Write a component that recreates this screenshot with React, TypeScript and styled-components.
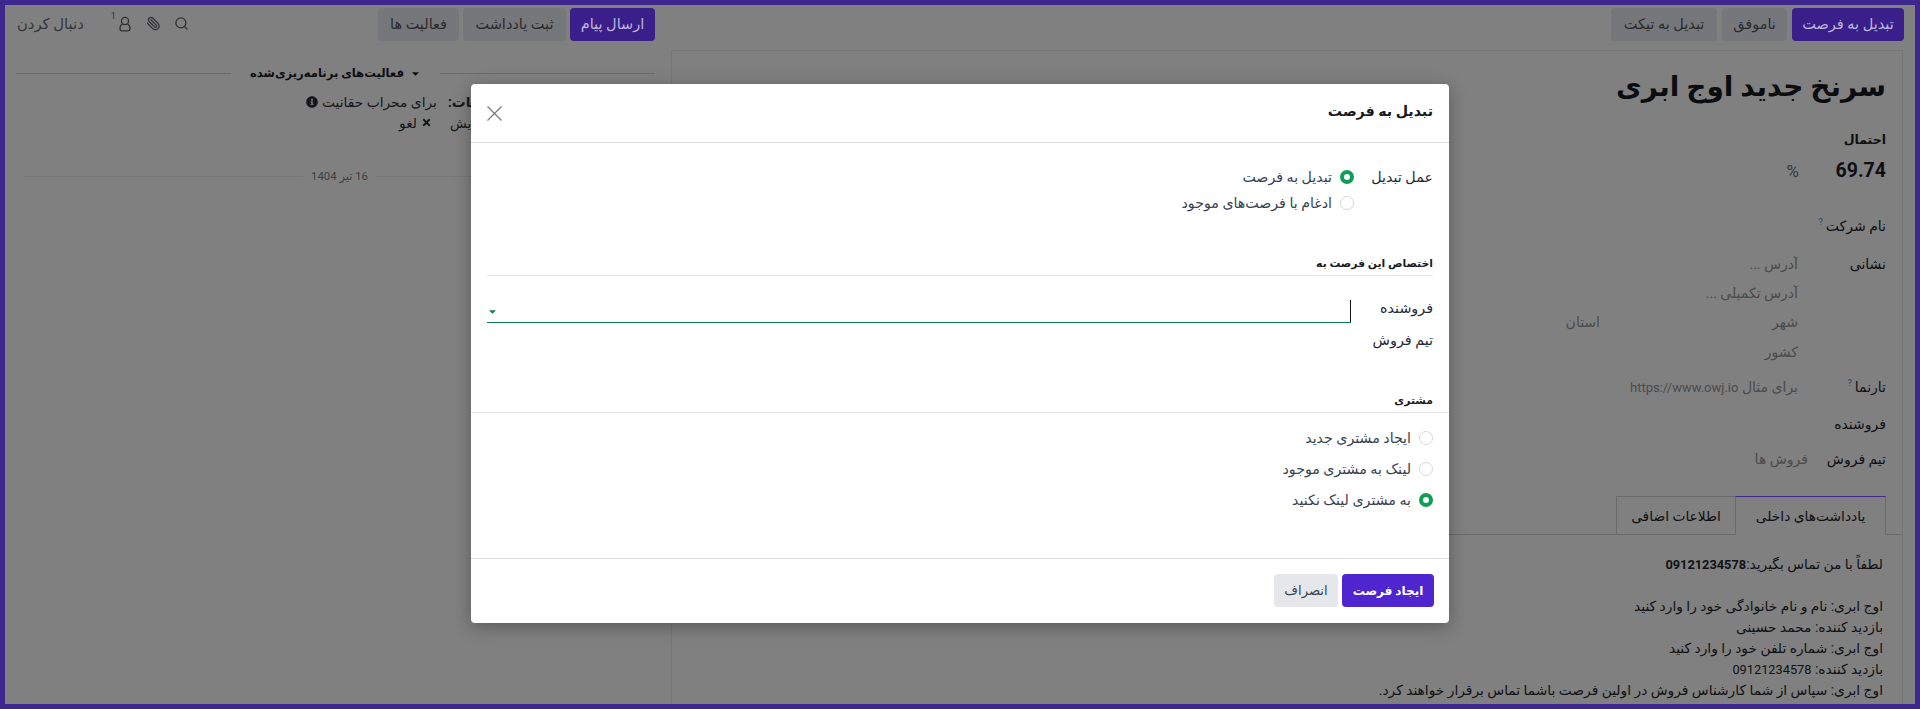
import React from "react";
import styled, { createGlobalStyle } from "styled-components";
import { Search, Paperclip } from "lucide-react";
import { FaInfoCircle, FaTimes, FaCaretDown } from "react-icons/fa";

const Global = createGlobalStyle`
  html, body { margin: 0; padding: 0; height: 100%; overflow: hidden; background: #808080; }
  * { box-sizing: border-box; }
  body { font-family: "DejaVu Sans", sans-serif; }
`;
const FONT = `Roboto, "DejaVu Sans", sans-serif`;

const Frame = styled.div`
  position: relative; width: 1920px; height: 709px; border: 5px solid #3f2790;
  background: #808080; display: flex; direction: rtl; font-family: ${FONT};
  font-size: 14px; color: #0e0f12; overflow: hidden;
`;
const FormColumn = styled.section`
  width: 1244px; flex: none; display: flex; flex-direction: column;
`;
const ChatterColumn = styled.aside`
  flex: 1; display: flex; flex-direction: column; padding: 0 16px 0 11px; min-width: 0;
`;
const StatusBar = styled.div`
  display: flex; gap: 5px; padding: 3px 11px 0 0; height: 36px; flex: none;
`;
const Btn = styled.button<{ $primary?: boolean; $w: number }>`
  width: ${p => p.$w}px; height: 33px; flex: none; border: 0; border-radius: 4px; padding: 0;
  font: inherit; font-size: 14.5px; white-space: nowrap;
  background: ${p => (p.$primary ? "#3a1e8a" : "#76777a")};
  color: ${p => (p.$primary ? "#bfb6da" : "#2a2b2f")};
`;
const Sheet = styled.div`
  flex: 1; margin: 9px 12px 0 0; border: 1px solid #777; border-bottom: 0; padding-top: 14px; overflow: hidden; min-height: 0;
`;
const Title = styled.h1`
  margin: 0; padding-right: 16px; height: 46px; line-height: 44px; font-size: 28px; font-weight: 700; color: #0b0c0f;
`;
const Row = styled.div<{ $mt: number; $h?: number; $bold?: boolean }>`
  margin-top: ${p => p.$mt}px; height: ${p => p.$h ?? 24}px; line-height: ${p => p.$h ?? 24}px;
  padding-right: 16px; display: flex; align-items: center; white-space: nowrap;
  font-weight: ${p => (p.$bold ? 700 : 400)}; ${p => (p.$bold ? "font-size: 12.5px;" : "")}
`;
const Prob = styled.strong`
  font-size: 19.5px; width: 50px; flex: none; font-family: Roboto, sans-serif;
`;
const Percent = styled.span`
  margin-right: 37px; font-size: 17px; color: #3a3a3a;
`;
const Help = styled.sup`
  font-size: 9px; color: #2b4a5c; margin-right: 3px; line-height: 0; align-self: flex-start; margin-top: 8px;
`;
const LabelCell = styled.span<{ $w?: number }>`
  width: ${p => p.$w ?? 88}px; flex: none; display: inline-flex;
`;
const Placeholder = styled.span<{ $w?: number }>`
  color: #4b4b4d; ${p => (p.$w ? `width: ${p.$w}px; flex: none;` : "")}
`;
const Latin = styled.span`
  font-family: Roboto, sans-serif; font-size: 13px;
`;
const AddressRow = styled.div`
  height: 29.33px; padding-right: 16px; display: flex; align-items: center; white-space: nowrap;
`;
const AddressBlock = styled.div`
  margin-top: 11px;
`;
const Tabs = styled.div`
  margin-top: 25px; height: 39px; display: flex; padding-right: 16px; border-bottom: 1px solid #6a6a6a;
`;
const Tab = styled.div<{ $active?: boolean; $w: number }>`
  width: ${p => p.$w}px; height: 39px; display: flex; align-items: center; justify-content: center; font-size: 13.8px;
  border: 1px solid #6a6a6a; border-top-color: ${p => (p.$active ? "#3f2790" : "#6a6a6a")};
  border-bottom-color: ${p => (p.$active ? "#808080" : "#6a6a6a")};
  ${p => (p.$active ? "" : "border-right: 0;")}
`;
const Notes = styled.div`
  padding: 19px 19px 0 0; line-height: 21px; font-size: 13.8px; color: #101114; white-space: nowrap;
`;
const Digits = styled.span<{ $bold?: boolean }>`
  font-family: Roboto, sans-serif; font-size: 12.8px; font-weight: ${p => (p.$bold ? 700 : 400)};
`;
const ChatterBar = styled.div`
  display: flex; align-items: flex-start; justify-content: space-between; padding-top: 3px; height: 36px; flex: none;
`;
const ChatterButtons = styled.div`
  display: flex; gap: 4px;
`;
const ChatterTools = styled.div`
  display: flex; align-items: center; height: 31px; color: #3c3c3c;
`;
const ToolIcon = styled.span<{ $mr: number }>`
  display: inline-flex; margin-left: ${p => p.$mr}px; color: #2f3033;
`;
const ClipIcon = styled(Paperclip)`
  transform: scaleX(-1);
`;
const Count = styled.sup`
  font-size: 9px; line-height: 0; align-self: flex-start; margin: 8px 0 0 27px; color: #2f3033; font-family: Roboto, sans-serif;
`;
const Follow = styled.span`
  font-size: 14.8px; color: #35363a; margin-left: 1px;
`;
const Section = styled.div`
  margin-top: 22px; height: 20px; display: flex; align-items: center; font-size: 11.6px; font-weight: 700; gap: 8px; white-space: nowrap;
`;
const SectionLine = styled.span`
  flex: 1; height: 1px; background: #6b6b6b;
`;
const SectionTitle = styled.span`
  display: inline-flex; align-items: center; gap: 6px; padding: 0 11px; color: #0d0e10;
`;
const ActivityRow = styled.div<{ $pad: number; $mt: number; $gap: number }>`
  display: flex; justify-content: flex-end; align-items: center; gap: ${p => p.$gap}px; padding-left: ${p => p.$pad}px;
  margin-top: ${p => p.$mt}px; height: 21px; white-space: nowrap; font-size: 13.8px; color: #16171a;
`;
const Inline = styled.span`
  display: inline-flex; align-items: center; gap: 4px;
`;
const DateRow = styled.div`
  margin-top: 33px; height: 20px; display: flex; align-items: center; gap: 8px; padding-left: 8px; font-size: 11.4px; color: #3d3e40; white-space: nowrap;
`;
const DateLine = styled.span`
  flex: 1; height: 1px; background: #777;
`;

/* Modal */
const Modal = styled.div`
  position: absolute; left: 466px; top: 79px; width: 978px; height: 539px; background: #fff;
  border-radius: 4px; box-shadow: 0 4px 18px rgba(0, 0, 0, .3); display: flex; flex-direction: column; color: #1f2937;
`;
const ModalHead = styled.header`
  height: 59px; flex: none; border-bottom: 1px solid #dee2e6; display: flex; align-items: center; justify-content: space-between; padding: 0 16px;
`;
const ModalTitle = styled.h4`
  margin: 0; font-size: 14.2px; font-weight: 700; color: #16181d; position: relative; top: -2px;
`;
const CloseIcon = styled.svg`
  width: 15px; height: 15px; color: #7b7b7b; flex: none;
`;
const ModalBody = styled.div`
  flex: 1; padding: 0 16px; display: flex; flex-direction: column; min-height: 0;
`;
const ConvertRow = styled.div`
  display: flex; margin-top: 24px;
`;
const FieldName = styled.span`
  width: 79px; flex: none; font-size: 14.3px; line-height: 20px;
`;
const RadioCol = styled.div`
  display: flex; flex-direction: column;
`;
const RadioRow = styled.label<{ $h: number }>`
  height: ${p => p.$h}px; display: flex; align-items: center; gap: 8px; font-size: 14.2px; color: #374151; white-space: nowrap;
`;
const Radio = styled.span<{ $on?: boolean }>`
  width: 14px; height: 14px; flex: none; border-radius: 50%; background: #fff;
  border: ${p => (p.$on ? "4px solid #0f9d58" : "1px solid #d5d7da")};
`;
const GroupHead = styled.div<{ $mt: number }>`
  margin-top: ${p => p.$mt}px; height: 20px; line-height: 20px; font-size: 10.8px; font-weight: 700; color: #1b1d22;
`;
const GroupRule = styled.div<{ $bleed?: boolean }>`
  height: 1px; background: #e3e5e8; margin-top: 1px; flex: none; ${p => (p.$bleed ? "margin-left: -16px; margin-right: -16px;" : "")}
`;
const SelectRow = styled.div`
  display: flex; margin-top: 24px; height: 23px;
`;
const SelectLabel = styled.span`
  width: 82px; flex: none; font-size: 14.3px; line-height: 17px;
`;
const Select = styled.div`
  flex: 1; height: 23px; border-bottom: 1px solid #0f7a5a; display: flex; align-items: center; justify-content: space-between; color: #1b7a5c;
`;
const Caret = styled.span`
  width: 1px; height: 22px; background: #111;
`;
const TeamLabel = styled.div`
  margin-top: 7px; font-size: 14.3px; line-height: 20px;
`;
const CustomerRadios = styled.div`
  margin-top: 9px; display: flex; flex-direction: column;
`;
const ModalFoot = styled.footer`
  height: 65px; flex: none; border-top: 1px solid #dee2e6; display: flex; gap: 4px; padding: 15px 15px 0;
`;
const ModalBtn = styled.button<{ $primary?: boolean; $w: number }>`
  width: ${p => p.$w}px; height: 33px; border: 0; border-radius: 4px; padding: 0; font: inherit;
  font-size: ${p => (p.$primary ? 12 : 13.2)}px;
  font-weight: ${p => (p.$primary ? 700 : 400)};
  background: ${p => (p.$primary ? "#4f25cf" : "#e5e7eb")};
  color: ${p => (p.$primary ? "#fff" : "#374151")};
`;

export default function App() {
  return (
    <>
      <Global />
      <Frame>
        <FormColumn>
          <StatusBar>
            <Btn $primary $w={112}>تبدیل به فرصت</Btn>
            <Btn $w={65}>ناموفق</Btn>
            <Btn $w={106}>تبدیل به تیکت</Btn>
          </StatusBar>
          <Sheet>
            <Title>سرنخ جدید اوج ابری</Title>
            <Row $mt={19} $h={20} $bold>احتمال</Row>
            <Row $mt={7} $h={28}><Prob>69.74</Prob><Percent>%</Percent></Row>
            <Row $mt={29}>نام شرکت<Help>?</Help></Row>
            <AddressBlock>
              <AddressRow><LabelCell>نشانی</LabelCell><Placeholder>آدرس ...</Placeholder></AddressRow>
              <AddressRow><LabelCell /><Placeholder>آدرس تکمیلی ...</Placeholder></AddressRow>
              <AddressRow><LabelCell /><Placeholder $w={198}>شهر</Placeholder><Placeholder>استان</Placeholder></AddressRow>
              <AddressRow><LabelCell /><Placeholder>کشور</Placeholder></AddressRow>
            </AddressBlock>
            <Row $mt={9}><LabelCell>تارنما<Help>?</Help></LabelCell><Placeholder>برای مثال <Latin>https://www.owj.io</Latin></Placeholder></Row>
            <Row $mt={13}>فروشنده</Row>
            <Row $mt={11}><LabelCell $w={78}>تیم فروش</LabelCell><Placeholder>فروش ها</Placeholder></Row>
            <Tabs>
              <Tab $active $w={151}>یادداشت‌های داخلی</Tab>
              <Tab $w={119}>اطلاعات اضافی</Tab>
            </Tabs>
            <Notes>
              لطفاً با من تماس بگیرید:<Digits $bold>09121234578</Digits><br /><br />
              اوج ابری: نام و نام خانوادگی خود را وارد کنید<br />
              بازدید کننده: محمد حسینی<br />
              اوج ابری: شماره تلفن خود را وارد کنید<br />
              بازدید کننده: <Digits>09121234578</Digits><br />
              اوج ابری: سپاس از شما کارشناس فروش در اولین فرصت باشما تماس برقرار خواهند کرد.
            </Notes>
          </Sheet>
        </FormColumn>
        <ChatterColumn>
          <ChatterBar>
            <ChatterButtons>
              <Btn $primary $w={85}>ارسال پیام</Btn>
              <Btn $w={103}>ثبت یادداشت</Btn>
              <Btn $w={81}>فعالیت ها</Btn>
            </ChatterButtons>
            <ChatterTools>
              <ToolIcon $mr={13}><Search size={15} /></ToolIcon>
              <ToolIcon $mr={13}><ClipIcon size={15} /></ToolIcon>
              <ToolIcon $mr={1}>
                <svg width="16" height="16" viewBox="0 0 16 16" fill="none" stroke="currentColor" strokeWidth="1.3">
                  <circle cx="8" cy="5" r="3.6" />
                  <path d="M5.6 7.8 C3.4 9 3 11 3 12.6 C3 14 4 14.8 5.2 14.8 H10.8 C12 14.8 13 14 13 12.6 C13 11 12.6 9 10.4 7.8" />
                </svg>
              </ToolIcon>
              <Count>1</Count>
              <Follow>دنبال کردن</Follow>
            </ChatterTools>
          </ChatterBar>
          <Section>
            <SectionLine />
            <SectionTitle><FaCaretDown size={11} />فعالیت‌های برنامه‌ریزی‌شده</SectionTitle>
            <SectionLine />
          </Section>
          <ActivityRow $pad={290} $mt={8} $gap={11}>
            <b>اطلاعات:</b>
            <Inline>برای محراب حقانیت <FaInfoCircle size={12} /></Inline>
          </ActivityRow>
          <ActivityRow $pad={383} $mt={0} $gap={18}>
            <span>ویرایش</span>
            <Inline><FaTimes size={11} />لغو</Inline>
          </ActivityRow>
          <DateRow>
            <DateLine />
            <span>16 تیر 1404</span>
            <DateLine />
          </DateRow>
        </ChatterColumn>
        <Modal>
          <ModalHead>
            <ModalTitle>تبدیل به فرصت</ModalTitle>
            <CloseIcon viewBox="0 0 15 15" fill="none" stroke="currentColor" strokeWidth="1.3">
              <path d="M0.5 0.5 L14.5 14.5 M14.5 0.5 L0.5 14.5" />
            </CloseIcon>
          </ModalHead>
          <ModalBody>
            <ConvertRow>
              <FieldName>عمل تبدیل</FieldName>
              <RadioCol>
                <RadioRow $h={20}><Radio $on />تبدیل به فرصت</RadioRow>
                <RadioRow $h={32}><Radio />ادغام با فرصت‌های موجود</RadioRow>
              </RadioCol>
            </ConvertRow>
            <GroupHead $mt={35}>اختصاص این فرصت به</GroupHead>
            <GroupRule />
            <SelectRow>
              <SelectLabel>فروشنده</SelectLabel>
              <Select><Caret /><FaCaretDown size={11} /></Select>
            </SelectRow>
            <TeamLabel>تیم فروش</TeamLabel>
            <GroupHead $mt={41}>مشتری</GroupHead>
            <GroupRule $bleed />
            <CustomerRadios>
              <RadioRow $h={31}><Radio />ایجاد مشتری جدید</RadioRow>
              <RadioRow $h={31}><Radio />لینک به مشتری موجود</RadioRow>
              <RadioRow $h={31}><Radio $on />به مشتری لینک نکنید</RadioRow>
            </CustomerRadios>
          </ModalBody>
          <ModalFoot>
            <ModalBtn $primary $w={92}>ایجاد فرصت</ModalBtn>
            <ModalBtn $w={64}>انصراف</ModalBtn>
          </ModalFoot>
        </Modal>
      </Frame>
    </>
  );
}
